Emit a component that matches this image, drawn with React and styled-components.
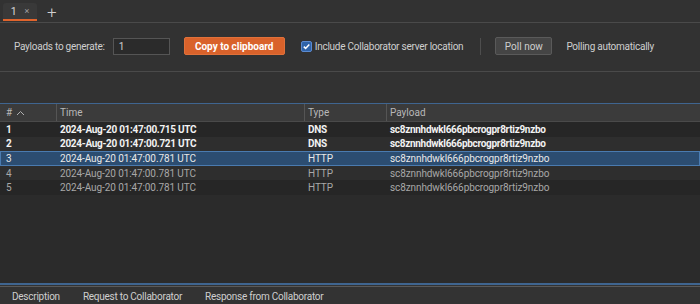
import React from "react";
import styled, { createGlobalStyle } from "styled-components";

const Global = createGlobalStyle`
  html, body { margin: 0; padding: 0; background: #323232; }
  body { font-family: Roboto, "Noto Sans", sans-serif; font-size: 9.5px; color: #d6d6d6; }
  #root { width: 700px; height: 304px; overflow: hidden; }
`;

const Page = styled.div`
  width: 700px;
  height: 304px;
  display: flex;
  flex-direction: column;
  background: #323232;
`;

const TabBar = styled.div`
  height: 23px;
  display: flex;
  align-items: stretch;
  padding-left: 3px;
  border-bottom: 1px solid #4a4a4a;
  box-sizing: border-box;
`;

const Tab = styled.div`
  width: 34px;
  margin-top: 3px;
  height: 18px;
  box-sizing: border-box;
  background: #393939;
  border-radius: 3px 3px 0 0;
  border-bottom: 2px solid #e0642c;
  display: flex;
  align-items: center;
  justify-content: center;
  gap: 8px;
  color: #d8d8d8;
  font-size: 10.5px;
`;

const TabClose = styled.span`
  font-size: 9px;
  color: #a0a0a0;
`;

const AddTab = styled.div`
  margin-left: 10px;
  display: flex;
  align-items: center;
  color: #d0d0d0;
  font-size: 17px;
  font-weight: 300;
  padding-top: 1px;
`;

const Controls = styled.div`
  height: 49px;
  display: flex;
  align-items: center;
  padding: 0 0 2px 14px;
  border-bottom: 1px solid #4a4a4a;
  box-sizing: border-box;
`;

const Label = styled.span`
  color: #cfcfcf;
  white-space: nowrap;
  font-size: 10px;
  letter-spacing: -0.25px;
`;

const Input = styled.div`
  margin-left: 8px;
  width: 57px;
  height: 17px;
  box-sizing: border-box;
  border: 1px solid #555;
  background: #2b2b2b;
  color: #cfcfcf;
  padding-left: 5px;
  display: flex;
  align-items: center;
  font-size: 10px;
`;

const Button = styled.div`
  height: 18px;
  box-sizing: border-box;
  border-radius: 2px;
  display: flex;
  align-items: center;
  justify-content: center;
  white-space: nowrap;
  font-size: 10px;
  width: ${p => p.$w}px;
  margin-left: ${p => p.$ml}px;
  background: ${p => (p.$primary ? "#d9622b" : "#454545")};
  border: 1px solid ${p => (p.$primary ? "#e0713a" : "#5a5a5a")};
  color: ${p => (p.$primary ? "#ffffff" : "#cfcfcf")};
  font-weight: ${p => (p.$primary ? 700 : 400)};
`;

const Check = styled.div`
  margin-left: 16px;
  width: 11px;
  height: 11px;
  border-radius: 2px;
  background: #2f63a8;
  border: 1px solid #5b8ad0;
  box-sizing: border-box;
  display: flex;
  align-items: center;
  justify-content: center;
`;

const CheckLabel = styled(Label)`
  margin-left: 3px;
`;

const VSep = styled.div`
  width: 1px;
  height: 17px;
  background: #4e4e4e;
  margin-left: 17px;
`;

const Status = styled(Label)`
  margin-left: 14px;
`;

const Spacer = styled.div`
  height: 31px;
`;

const Table = styled.div`
  flex: 1;
  background: #2b2b2b;
  border-top: 1px solid #3f6590;
  display: flex;
  flex-direction: column;
`;

const cols = "56px 248px 82px 1fr";

const HeaderRow = styled.div`
  display: grid;
  grid-template-columns: ${cols};
  height: 17px;
  background: #3b3b3b;
  border-bottom: 1px solid #4a4a4a;
`;

const HeaderCell = styled.div`
  display: flex;
  align-items: center;
  padding-left: 3px;
  color: #b8b8b8;
  font-size: 10px;
  border-left: ${p => (p.$first ? "none" : "1px solid #555")};
  gap: 4px;
`;

const Row = styled.div`
  display: grid;
  grid-template-columns: ${cols};
  height: 14.6px;
  font-size: 10px;
  letter-spacing: ${p => (p.$bold ? "-0.3px" : "-0.1px")};
  background: ${p => (p.$sel ? "#2c4d71" : p.$odd ? "#262626" : "#2e2e2e")};
  box-shadow: ${p => (p.$sel ? "inset 0 0 0 1px #4a7bb0" : "none")};
  color: ${p => (p.$sel ? "#e8e8e8" : p.$bold ? "#f2f2f2" : "#a8a8a8")};
  font-weight: ${p => (p.$bold ? 700 : 400)};
`;

const Cell = styled.div`
  display: flex;
  align-items: center;
  padding-left: ${p => (p.$first ? 6 : 4)}px;
  white-space: nowrap;
  overflow: hidden;
`;

const Fill = styled.div`
  flex: 1;
`;

const Bottom = styled.div`
  border-top: 2px solid #3f6590;
  background: #333;
  box-sizing: border-box;
  height: 21px;
  display: flex;
  flex-direction: column;
`;

const BottomTabs = styled.div`
  border-top: 1px solid #5a5a5a;
  margin-top: 1px;
  display: flex;
  align-items: center;
  height: 17px;
  padding: 3px 0 0 12px;
  box-sizing: border-box;
  gap: 23px;
  color: #cfcfcf;
  font-size: 10px;
  letter-spacing: -0.25px;
`;

const rows = [
  { n: 1, t: "2024-Aug-20 01:47:00.715 UTC", type: "DNS", bold: true },
  { n: 2, t: "2024-Aug-20 01:47:00.721 UTC", type: "DNS", bold: true },
  { n: 3, t: "2024-Aug-20 01:47:00.781 UTC", type: "HTTP", sel: true },
  { n: 4, t: "2024-Aug-20 01:47:00.781 UTC", type: "HTTP" },
  { n: 5, t: "2024-Aug-20 01:47:00.781 UTC", type: "HTTP" },
];

export default function App() {
  return (
    <Page>
      <Global />
      <TabBar>
        <Tab>
          <span>1</span>
          <TabClose>×</TabClose>
        </Tab>
        <AddTab>+</AddTab>
      </TabBar>
      <Controls>
        <Label>Payloads to generate:</Label>
        <Input>1</Input>
        <Button $primary $w={101} $ml={14}>Copy to clipboard</Button>
        <Check>
          <svg width="9" height="9" viewBox="0 0 9 9">
            <path d="M1.8 4.6 L3.6 6.4 L7.3 2.4" fill="none" stroke="#fff" strokeWidth="1.5" />
          </svg>
        </Check>
        <CheckLabel>Include Collaborator server location</CheckLabel>
        <VSep />
        <Button $w={57} $ml={14}>Poll now</Button>
        <Status>Polling automatically</Status>
      </Controls>
      <Spacer />
      <Table>
        <HeaderRow>
          <HeaderCell $first>
            <span style={{ paddingLeft: 3 }}>#</span>
            <svg width="9" height="6" viewBox="0 0 9 6">
              <path d="M1 5 L4.5 1.5 L8 5" fill="none" stroke="#b0b0b0" strokeWidth="1" />
            </svg>
          </HeaderCell>
          <HeaderCell>Time</HeaderCell>
          <HeaderCell>Type</HeaderCell>
          <HeaderCell>Payload</HeaderCell>
        </HeaderRow>
        {rows.map((r, i) => (
          <Row key={r.n} $sel={r.sel} $bold={r.bold} $odd={i % 2 === 0}>
            <Cell $first>{r.n}</Cell>
            <Cell>{r.t}</Cell>
            <Cell>{r.type}</Cell>
            <Cell>sc8znnhdwkl666pbcrogpr8rtiz9nzbo</Cell>
          </Row>
        ))}
        <Fill />
      </Table>
      <Bottom>
        <BottomTabs>
          <span>Description</span>
          <span>Request to Collaborator</span>
          <span>Response from Collaborator</span>
        </BottomTabs>
      </Bottom>
    </Page>
  );
}
